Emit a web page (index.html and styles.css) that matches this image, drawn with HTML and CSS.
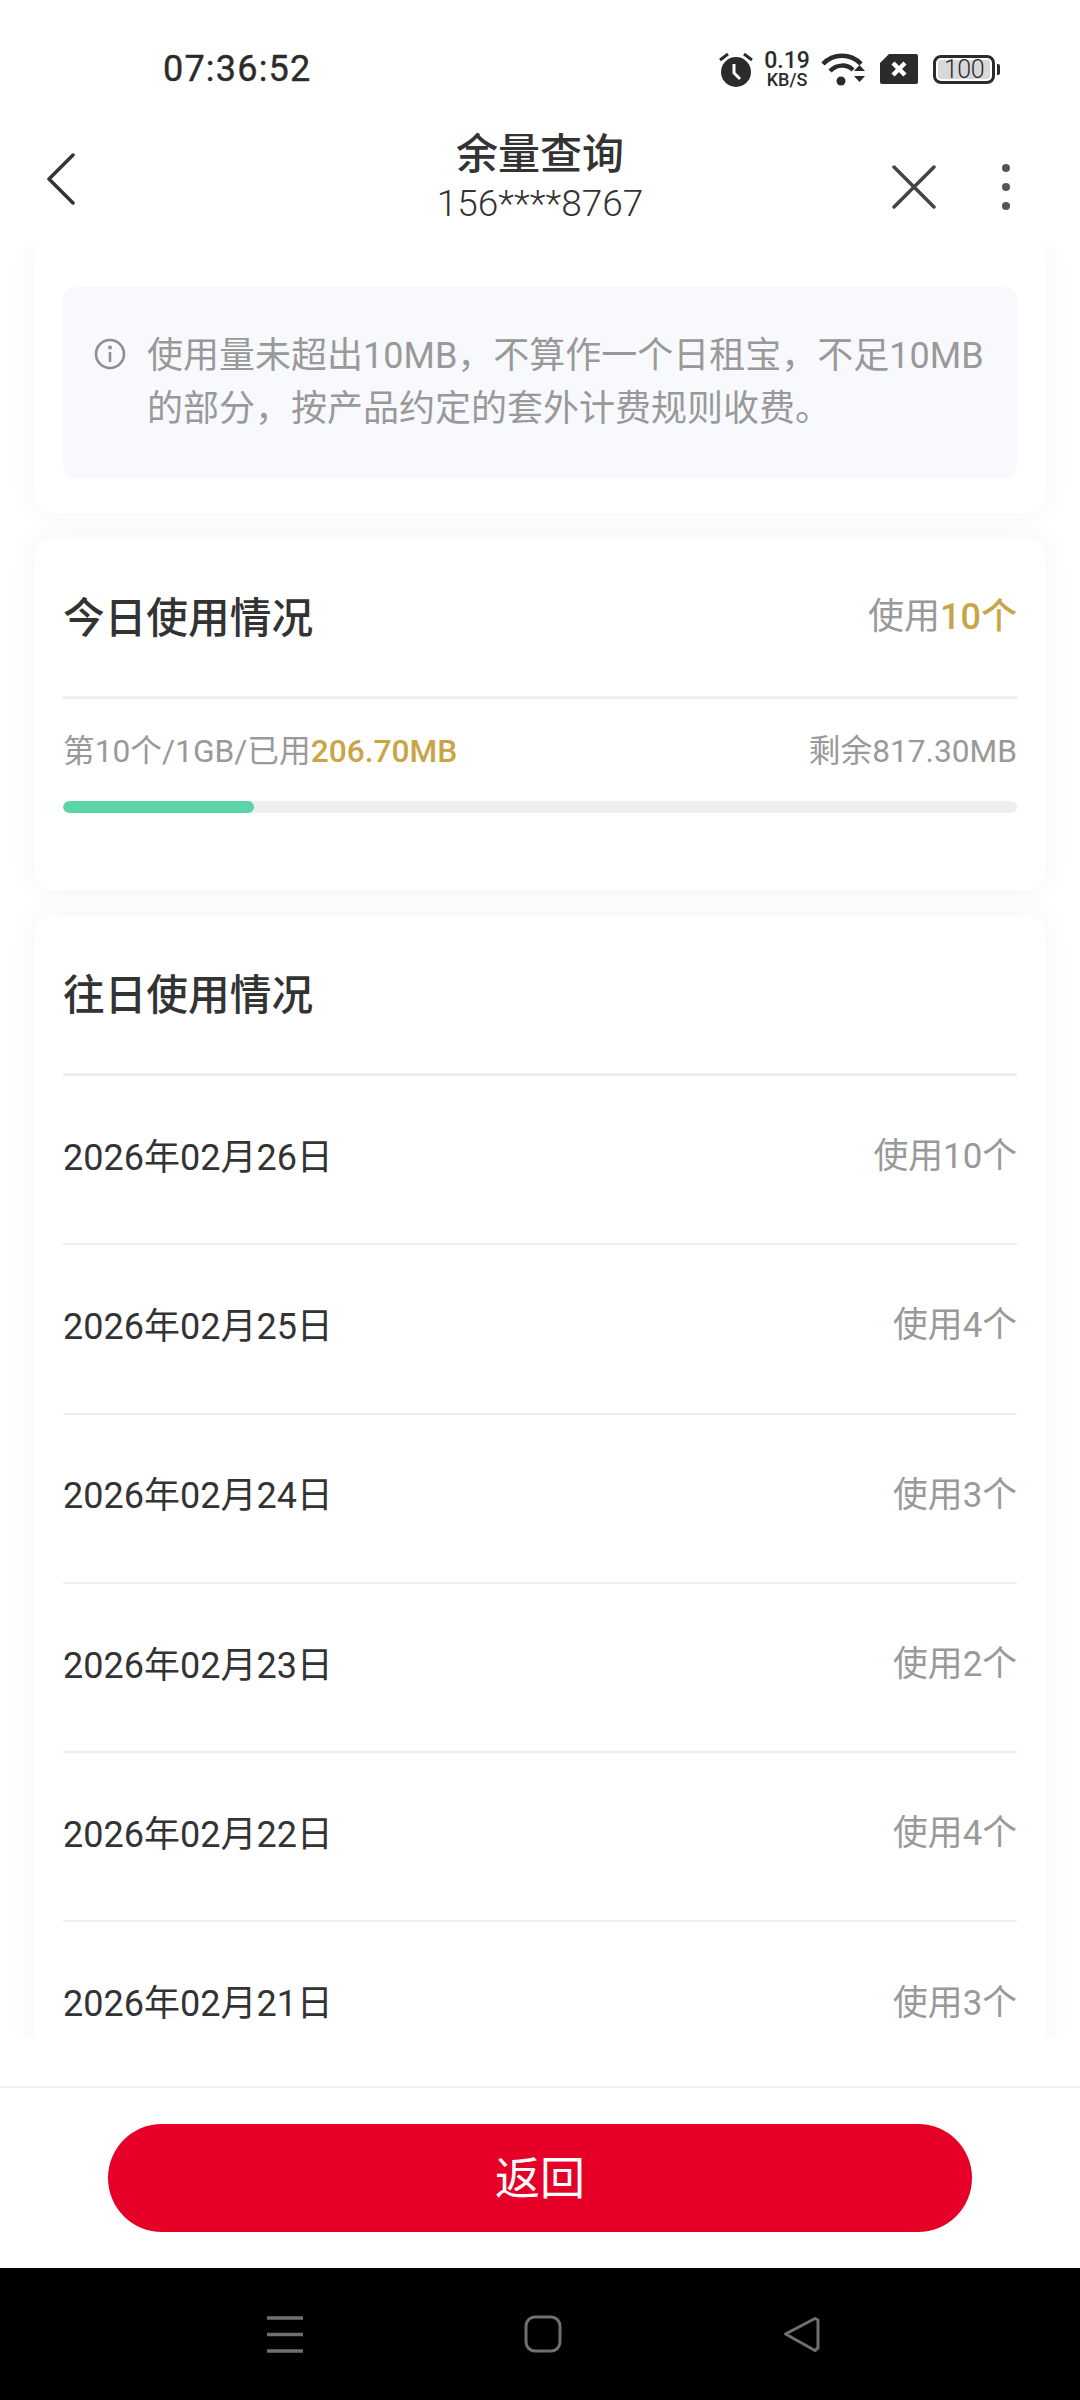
FILE: index.html
```html
<!DOCTYPE html>
<html lang="zh-CN">
<head>
    <meta charset="UTF-8">
    <meta name="viewport" content="width=device-width, initial-scale=1.0">
    <title>余量查询</title>
    <link rel="stylesheet" href="styles.css">
</head>
<body>

    <div class="status-bar">
        <span class="time">07:36:52</span>
        <div class="status-icons">
            <svg class="ic-alarm" width="34" height="36" viewBox="0 0 34 36">
                <circle cx="17" cy="21" r="15" fill="#2b2b2b"/>
                <path d="M1 9 9 3M33 9 25 3" stroke="#2b2b2b" stroke-width="3" fill="none"/>
                <path d="M15 13v9l6 6" stroke="#fff" stroke-width="3" fill="none"/>
            </svg>
            <div class="speed"><b>0.19</b><small>KB/S</small></div>
            <svg class="ic-wifi" width="46" height="34" viewBox="0 0 46 34">
                <path d="M2 12C12 1 30 1 40 12" stroke="#2b2b2b" stroke-width="4.5" fill="none"/>
                <path d="M9 19C16 12 26 12 32 18" stroke="#2b2b2b" stroke-width="4.5" fill="none"/>
                <circle cx="20" cy="29" r="4.5" fill="#2b2b2b"/>
                <path d="M33 19h11l-5.500-6zM33 24h11l-5.500 6z" fill="#2b2b2b"/>
            </svg>
            <svg class="ic-sim" width="38" height="30" viewBox="0 0 38 30">
                <path d="M9 0H36a2 2 0 0 1 2 2V28a2 2 0 0 1-2 2H2a2 2 0 0 1-2-2V9z" fill="#2b2b2b"/>
                <path d="M13 9 25 21M25 9 13 21" stroke="#fff" stroke-width="4.5"/>
            </svg>
            <div class="battery">
                <div class="battery-body"><span>100</span></div>
                <i class="battery-nub"></i>
            </div>
        </div>
    </div>

    <div class="top-nav">
        <div class="nav-left">
            <svg width="29" height="52" viewBox="0 0 29 52">
                <path d="M27 2 3 26 27 50" stroke="#333" stroke-width="3.5" fill="none" stroke-linecap="round" stroke-linejoin="round"/>
            </svg>
        </div>
        <div class="nav-title">
            <h1>余量查询</h1>
            <p>156****8767</p>
        </div>
        <div class="nav-right">
            <svg width="44" height="44" viewBox="0 0 44 44">
                <path d="M2 2 42 42M42 2 2 42" stroke="#444" stroke-width="3.5" stroke-linecap="round"/>
            </svg>
            <div class="dots"><i></i><i></i><i></i></div>
        </div>
    </div>

    <div class="content">
        <div class="card card-note">
            <div class="note">
                <svg class="ic-info" width="32" height="32" viewBox="0 0 32 32">
                    <circle cx="16" cy="16" r="14" stroke="#8f8f8f" stroke-width="2.6" fill="none"/>
                    <circle cx="16" cy="9.5" r="2" fill="#8f8f8f"/>
                    <path d="M16 14v10" stroke="#8f8f8f" stroke-width="2.6"/>
                </svg>
                <p>使用量未超出10MB，不算作一个日租宝，不足10MB的部分，按产品约定的套外计费规则收费。</p>
            </div>
        </div>

        <div class="card card-today">
            <div class="card-head">
                <h2>今日使用情况</h2>
                <span class="head-count">使用<em>10个</em></span>
            </div>
            <div class="usage-line">
                <span>第10个/1GB/已用<em>206.70MB</em></span>
                <span>剩余817.30MB</span>
            </div>
            <div class="progress"><div class="progress-fill" style="width: 20%"></div></div>
        </div>

        <div class="card card-history">
            <div class="card-head">
                <h2>往日使用情况</h2>
            </div>
            <div class="row"><span>2026年02月26日</span><span class="row-count">使用10个</span></div>
            <div class="row"><span>2026年02月25日</span><span class="row-count">使用4个</span></div>
            <div class="row"><span>2026年02月24日</span><span class="row-count">使用3个</span></div>
            <div class="row"><span>2026年02月23日</span><span class="row-count">使用2个</span></div>
            <div class="row"><span>2026年02月22日</span><span class="row-count">使用4个</span></div>
            <div class="row"><span>2026年02月21日</span><span class="row-count">使用3个</span></div>
        </div>
    </div>

    <div class="footer">
        <button class="back-btn">返回</button>
    </div>

    <div class="system-nav">
        <svg width="38" height="37" viewBox="0 0 38 37">
            <path d="M1 2H37M1 18.5H37M1 35H37" stroke="#707070" stroke-width="3.5"/>
        </svg>
        <svg width="38" height="38" viewBox="0 0 38 38">
            <rect x="2" y="2" width="34" height="34" rx="9" stroke="#707070" stroke-width="3" fill="none"/>
        </svg>
        <svg width="38" height="38" viewBox="0 0 38 38">
            <path d="M33 3.500 3.500 19 33 35.500 36 33V5z" stroke="#707070" stroke-width="3" fill="none" stroke-linejoin="round"/>
        </svg>
    </div>

</body>
</html>
```

FILE: styles.css
```css
* {
    box-sizing: border-box;
}

body {
    font-family: Roboto, "Noto Sans CJK SC", sans-serif;
    background-color: #fff;
    color: #333;
    margin: 0;
    padding: 0;
    width: 1080px;
    height: 2400px;
    display: flex;
    flex-direction: column;
    overflow: hidden;
}

h1, h2, p {
    margin: 0;
}

em {
    font-style: normal;
}

/* status bar */
.status-bar {
    height: 100px;
    flex-shrink: 0;
    display: flex;
    align-items: center;
    justify-content: space-between;
    padding: 38px 80px 0 163px;
    color: #2b2b2b;
}

.time {
    font-size: 36px;
    letter-spacing: 1.2px;
    -webkit-text-stroke: 0.4px #2b2b2b;
}

.status-icons {
    display: flex;
    align-items: center;
}

.speed {
    display: flex;
    flex-direction: column;
    align-items: center;
    width: 44px;
    margin: 0 12px 0 12px;
}

.speed b {
    font-size: 23px;
    font-weight: 500;
    line-height: 21px;
}

.speed small {
    font-size: 18px;
    font-weight: 500;
    line-height: 18px;
}

.ic-sim {
    margin: 0 15px 0 13px;
}

.battery {
    display: flex;
    align-items: center;
    gap: 2px;
}

.battery-body {
    width: 62px;
    height: 29px;
    border: 3px solid #2b2b2b;
    border-radius: 8px;
    padding: 2px;
    display: flex;
}

.battery-body span {
    flex: 1;
    background-color: #d8d8d8;
    border-radius: 3px;
    font-size: 25px;
    font-weight: 300;
    letter-spacing: -0.5px;
    line-height: 19px;
    text-align: center;
}

.battery-nub {
    width: 3px;
    height: 11px;
    background-color: #2b2b2b;
    border-radius: 0 2px 2px 0;
}

/* top nav */
.top-nav {
    height: 145px;
    flex-shrink: 0;
    display: grid;
    grid-template-columns: 1fr auto 1fr;
    align-items: center;
    padding: 0 70px 0 46px;
    background-color: #fff;
    position: relative;
    z-index: 1;
}

.nav-left {
    display: flex;
    align-items: center;
    margin-top: 12px;
}

.nav-title {
    text-align: center;
    margin: 4px 0 0 24px;
}

.nav-title h1 {
    font-size: 42px;
    font-weight: 500;
    line-height: 58px;
}

.nav-title p {
    font-size: 37px;
    font-weight: 300;
    line-height: 39px;
    color: #333;
}

.nav-right {
    display: flex;
    align-items: center;
    justify-content: flex-end;
    gap: 66px;
    margin-top: 29px;
}

.dots {
    display: flex;
    flex-direction: column;
    gap: 11px;
}

.dots i {
    width: 8px;
    height: 8px;
    border-radius: 50%;
    background-color: #555;
}

/* scroll area */
.content {
    height: 1793px;
    flex-shrink: 0;
    overflow: hidden;
    display: flex;
    flex-direction: column;
    gap: 26px;
}

.card {
    flex-shrink: 0;
    width: 1010px;
    margin: 0 35px;
    padding: 0 28px;
    background-color: #fff;
    border-radius: 16px;
    box-shadow: 0 0 30px rgba(0, 0, 0, 0.05);
}

.card-note {
    height: 268px;
    padding-top: 42px;
    border-radius: 0 0 16px 16px;
}

.note {
    display: flex;
    gap: 21px;
    height: 191px;
    padding: 43px 27px 0 31px;
    background-color: #f8f9fd;
    border-radius: 12px;
    color: #999;
    font-size: 36px;
    line-height: 53px;
}

.ic-info {
    flex-shrink: 0;
    margin-top: 8px;
}

.card-today {
    height: 351px;
}

.card-head {
    height: 160px;
    display: flex;
    align-items: center;
    justify-content: space-between;
    border-bottom: 3px solid #eee;
    padding-bottom: 6px;
}

.card-head h2 {
    font-size: 41.700px;
    font-weight: 500;
    color: #333;
}

.head-count {
    font-size: 36px;
    color: #999;
    margin-top: -4px;
}

.head-count em,
.usage-line em {
    color: #c9a548;
    font-weight: 500;
}

.usage-line {
    display: flex;
    justify-content: space-between;
    margin-top: 31px;
    font-size: 31.700px;
    line-height: 44px;
    color: #999;
}

.progress {
    height: 12px;
    margin-top: 27px;
    background-color: #eee;
    border-radius: 6px;
    overflow: hidden;
}

.progress-fill {
    height: 100%;
    background-color: #5bd4a8;
    border-radius: 6px;
}

.card-history {
    height: 1200px;
}

.row {
    height: 169.3px;
    display: flex;
    align-items: center;
    justify-content: space-between;
    border-bottom: 2px solid #eee;
    padding-bottom: 12px;
    font-size: 36px;
    color: #333;
}

.row-count {
    font-size: 34.800px;
    color: #999;
    margin-top: -1px;
}

/* footer */
.footer {
    height: 230px;
    flex-shrink: 0;
    margin-top: 0;
    padding: 48px 108px 0;
    position: relative;
    background-color: #fff;
}

.footer::before {
    content: "";
    position: absolute;
    left: 0;
    right: 0;
    top: 48px;
    height: 2px;
    background-color: #f2f2f2;
}

.back-btn {
    display: block;
    width: 864px;
    height: 108px;
    margin-top: 38px;
    padding: 0 0 6px;
    font-family: inherit;
    font-size: 45px;
    color: #fff;
    background-color: #e60027;
    border: none;
    border-radius: 54px;
}

/* android nav */
.system-nav {
    height: 132px;
    flex-shrink: 0;
    background-color: #000;
    display: flex;
    align-items: center;
    padding-left: 266px;
    gap: 220px;
}
```
